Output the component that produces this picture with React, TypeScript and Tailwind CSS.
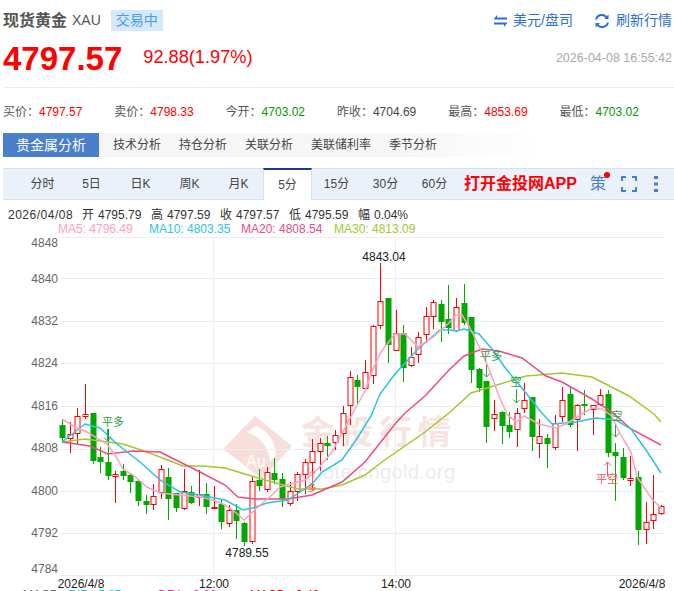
const stats = [
  { label: "买价：", value: "4797.57", color: "text-[#ff0000]" },
  { label: "卖价：", value: "4798.33", color: "text-[#ff0000]" },
  { label: "今开：", value: "4703.02", color: "text-[#009900]" },
  { label: "昨收：", value: "4704.69", color: "text-[#444444]" },
  { label: "最高：", value: "4853.69", color: "text-[#ff0000]" },
  { label: "最低：", value: "4703.02", color: "text-[#009900]" },
];

const analysisTabs = ["技术分析", "持仓分析", "关联分析", "美联储利率", "季节分析"];
const periods = ["分时", "5日", "日K", "周K", "月K", "5分", "15分", "30分", "60分"];

const ohlc = [
  { label: "开", value: "4795.79" },
  { label: "高", value: "4797.59" },
  { label: "收", value: "4797.57" },
  { label: "低", value: "4795.59" },
  { label: "幅", value: "0.04%" },
];

const maLegend = [
  { text: "MA5: 4796.49", className: "w-[91px] text-[#ffa0c0]" },
  { text: "MA10: 4803.35", className: "w-[92px] text-[#2bc4e0]" },
  { text: "MA20: 4808.54", className: "w-[93px] text-[#ee4b80]" },
  { text: "MA30: 4813.09", className: "text-[#a0c830]" },
];

// x, wick top, wick bottom, body top, body bottom, rising
type Candle = [number, number, number, number, number, boolean];

const candles: Candle[] = [
  [62, 418, 441, 424, 437, false],
  [70, 421, 452, 433, 437, true],
  [77, 407, 443, 415, 432, true],
  [85, 383, 418, 413, 415, true],
  [93, 412, 463, 412, 460, false],
  [100, 446, 472, 456, 461, false],
  [108, 428, 479, 461, 475, false],
  [115, 470, 502, 473, 475, true],
  [123, 463, 479, 470, 475, false],
  [130, 472, 492, 474, 481, false],
  [138, 479, 505, 480, 500, false],
  [146, 494, 513, 500, 504, false],
  [153, 483, 509, 495, 503, true],
  [161, 464, 498, 468, 491, true],
  [168, 467, 519, 476, 498, false],
  [176, 492, 511, 492, 507, false],
  [184, 468, 509, 490, 507, true],
  [191, 485, 503, 491, 502, false],
  [199, 469, 505, 493, 496, true],
  [206, 482, 513, 493, 506, false],
  [214, 485, 508, 506, 507, true],
  [221, 499, 528, 503, 521, false],
  [229, 504, 526, 509, 522, true],
  [236, 503, 538, 509, 520, false],
  [244, 521, 545, 522, 541, false],
  [252, 476, 543, 480, 540, true],
  [259, 468, 490, 479, 485, false],
  [267, 466, 491, 471, 488, true],
  [274, 457, 483, 472, 479, false],
  [282, 472, 506, 478, 498, false],
  [290, 481, 505, 490, 502, true],
  [297, 471, 500, 473, 490, true],
  [305, 458, 493, 461, 473, true],
  [312, 438, 490, 450, 461, true],
  [320, 437, 470, 442, 450, true],
  [327, 435, 459, 442, 445, false],
  [335, 429, 449, 434, 441, true],
  [343, 405, 445, 412, 432, true],
  [350, 370, 424, 376, 404, true],
  [357, 374, 403, 379, 386, false],
  [365, 359, 390, 371, 387, true],
  [373, 324, 383, 325, 374, true],
  [380, 262, 328, 300, 324, true],
  [388, 297, 362, 297, 344, false],
  [396, 309, 349, 332, 349, true],
  [403, 324, 381, 332, 367, false],
  [411, 346, 366, 356, 364, true],
  [418, 331, 362, 336, 353, true],
  [426, 306, 342, 315, 333, true],
  [433, 299, 328, 301, 315, true],
  [441, 299, 341, 303, 321, false],
  [448, 284, 333, 318, 327, false],
  [456, 297, 331, 306, 329, true],
  [464, 283, 324, 302, 322, false],
  [471, 316, 382, 316, 369, false],
  [479, 367, 391, 368, 387, false],
  [486, 380, 442, 380, 426, false],
  [494, 399, 430, 413, 417, true],
  [502, 410, 443, 411, 425, false],
  [509, 411, 437, 424, 431, false],
  [517, 407, 446, 412, 428, true],
  [524, 382, 412, 399, 407, true],
  [532, 396, 450, 396, 436, false],
  [539, 418, 457, 435, 442, true],
  [547, 433, 467, 437, 443, false],
  [555, 414, 449, 422, 446, true],
  [562, 386, 421, 399, 415, true],
  [570, 385, 426, 393, 424, false],
  [577, 403, 450, 404, 418, true],
  [584, 389, 414, 403, 405, false],
  [593, 404, 434, 404, 408, true],
  [600, 388, 405, 394, 403, true],
  [608, 389, 456, 393, 452, false],
  [615, 442, 500, 451, 455, false],
  [623, 447, 479, 456, 477, false],
  [630, 455, 485, 477, 479, true],
  [638, 470, 544, 476, 529, false],
  [646, 501, 543, 521, 528, true],
  [653, 474, 528, 513, 519, true],
  [661, 504, 514, 505, 512, true],
];

const ma5 =
  "62,418 75,426 87,431 107,443 115,454 123,468 133,474 147,486 160,492 180,494 200,496 213,499 225,504 235,511 244,519 258,506 272,494 280,486 305,479 317,469 332,451 348,421 355,408 365,390 373,368 381,351 395,333 405,333 418,346 432,337 449,322 456,314 462,314 469,325 479,345 489,368 499,395 507,413 516,421 524,415 539,423 556,427 566,423 582,413 592,407 602,408 612,415 619,431 631,451 637,476 652,498 662,508";
const ma10 =
  "62,441 85,423 100,427 117,443 140,461 160,479 180,491 200,494 225,499 243,509 253,507 267,502 288,499 312,483 322,471 342,459 358,436 371,415 380,393 395,373 418,348 440,329 450,329 456,330 464,328 479,333 492,348 506,368 522,387 541,411 552,423 576,421 596,417 616,419 631,428 646,449 661,472";
const ma20 =
  "62,441 90,445 108,453 133,450 160,451 180,461 200,471 225,484 238,496 255,498 288,498 312,494 342,481 365,461 395,423 405,412 425,395 449,369 464,355 482,348 499,350 522,357 546,375 562,381 592,398 612,411 631,428 661,444";
const ma30 =
  "62,441 85,438 123,443 147,451 183,465 203,465 225,467 245,473 265,479 298,488 322,488 342,484 365,474 382,461 425,431 449,412 471,392 526,375 562,372 592,376 629,395 654,413 661,421";

const gridY = [236, 277, 320, 362, 405, 448, 490, 532, 574];
const axisLabels = [
  { text: "4848", y: 246 },
  { text: "4840", y: 282 },
  { text: "4832", y: 324 },
  { text: "4824", y: 366 },
  { text: "4816", y: 409 },
  { text: "4808", y: 451 },
  { text: "4800", y: 494 },
  { text: "4792", y: 536 },
  { text: "4784", y: 572 },
];

const RED = "#ff0000";
const GREEN = "#00a800";
const CJK = "'Liberation Sans','Noto Sans CJK SC',sans-serif";

const KLineChart = () => (
  <svg width={674} height={356} viewBox="0 235 674 356" className="block" fontFamily={CJK}>
    {/* watermark */}
    <path d="M255 415 L292 445 L262 478 L223 448 Z" fill="#f6dfda" />
    <path d="M256 425 Q274 432 276 454 L270 461 Q268 438 246 431 Z" fill="#ffffff" />
    <text x="246" y="466" fontSize="16" fill="#ffffff">
      Au
    </text>
    <text x="301" y="443" fontSize="33" fontWeight="700" letterSpacing="6" fill="#f7e3df">
      金投行情
    </text>
    <text x="300" y="478" fontSize="20" letterSpacing="0.4" fill="#ececec">
      quote.cngold.org
    </text>

    {gridY.map((y) => (
      <line key={y} x1={60} x2={664} y1={y + 0.5} y2={y + 0.5} stroke="#eeeeee" />
    ))}
    <line x1={213.5} x2={213.5} y1={236} y2={574} stroke="#eeeeee" />
    <line x1={395.5} x2={395.5} y1={236} y2={574} stroke="#eeeeee" />

    {axisLabels.map((l) => (
      <text key={l.text} x={58} y={l.y} textAnchor="end" fontSize="12" fill="#666666">
        {l.text}
      </text>
    ))}

    {candles.map(([x, wt, wb, bt, bb, up]) => {
      const color = up ? RED : GREEN;
      return (
        <g key={x}>
          <line x1={x + 0.5} x2={x + 0.5} y1={wt} y2={up ? bt : wb} stroke={color} />
          {up && <line x1={x + 0.5} x2={x + 0.5} y1={bb} y2={wb} stroke={color} />}
          {up ? (
            <rect x={x - 2} y={bt + 0.5} width={5} height={Math.max(bb - bt, 1)} fill="#ffffff" stroke={color} />
          ) : (
            <rect x={x - 2.5} y={bt} width={6} height={bb - bt} fill={color} />
          )}
        </g>
      );
    })}

    <polyline points={ma30} fill="none" stroke="#a0c830" strokeWidth="1.5" />
    <polyline points={ma20} fill="none" stroke="#ee4b80" strokeWidth="1.5" />
    <polyline points={ma10} fill="none" stroke="#2bc4e0" strokeWidth="1.5" />
    <polyline points={ma5} fill="none" stroke="#ffa0c0" strokeWidth="1.5" />

    {/* trade marks */}
    <g fill="#2f9e3f" fontSize="11" textAnchor="middle">
      <text x={113} y={425}>平多</text>
      <text x={491} y={359}>平多</text>
      <text x={516} y={385}>空</text>
      <text x={617} y={419}>空</text>
    </g>
    <g fill="none" stroke="#2f9e3f">
      <path d="M107.5 428V440M104 436.5L107.5 440L111 436.5" />
      <path d="M486.5 364V376M483 372.5L486.5 376L490 372.5" />
      <path d="M516.5 388V402M513 398.5L516.5 402L520 398.5" />
      <path d="M615.5 424V436M612 432.5L615.5 436L619 432.5" />
    </g>
    <g fill="#ff5050" fontSize="11" textAnchor="middle">
      <text x={607} y={482}>平空</text>
      <text x={312} y={490} fontSize="9">多</text>
    </g>
    <g fill="none" stroke="#ff5050">
      <path d="M607.5 475V461M604 464.5L607.5 461L611 464.5" />
      <path d="M312.5 481V470M310 472.5L312.5 470L315 472.5" />
    </g>

    <g fontSize="12" fill="#222222" textAnchor="middle">
      <text x={384} y={260}>4843.04</text>
      <text x={247} y={556}>4789.55</text>
      <text x={81} y={587}>2026/4/8</text>
      <text x={214} y={587}>12:00</text>
      <text x={396} y={587}>14:00</text>
      <text x={642} y={587}>2026/4/8</text>
    </g>
    <g fontSize="12">
      <text x={23} y={598} fill="#666666">MACD</text>
      <text x={68} y={598} fill="#2bc4e0">DIF: -5.85</text>
      <text x={158} y={598} fill="#e040c0">DEA: -3.03</text>
      <text x={250} y={598} fill="#ff0000">MACD: -3.48</text>
    </g>
  </svg>
);

const App = () => {
  return (
    <div className="w-[674px] h-[591px] overflow-hidden bg-white font-['Liberation_Sans','Noto_Sans_CJK_SC',sans-serif]">
      <div className="flex items-center h-[21px] pt-[10px] box-content pl-[3px] pr-[2px]">
        <span className="text-[16px] font-bold text-[#555555]">现货黄金</span>
        <span className="ml-[5px] text-[14px] text-[#555555]">XAU</span>
        <span className="ml-[10px] w-[52px] h-[21px] leading-[21px] text-center text-[14px] text-[#4a9be8] bg-[#d6e9fb]">
          交易中
        </span>
        <div className="ml-auto flex items-center text-[14px] text-[#2f6fd0]">
          <svg width="15" height="12" viewBox="0 0 15 12" fill="#2f6fd0">
            <path d="M4 0L4 2.5H14V4.5H0.5Z" />
            <path d="M11 12L11 9.5H1V7.5H14.5Z" />
          </svg>
          <span className="ml-[5px]">美元/盘司</span>
          <svg className="ml-[21px]" width="16" height="16" viewBox="0 0 16 16" fill="none" stroke="#2f6fd0" strokeWidth="2">
            <path d="M2 6.5A6 6 0 0 1 13 5" />
            <path d="M14 9.5A6 6 0 0 1 3 11" />
            <path d="M14.5 1.5V6H10Z" fill="#2f6fd0" stroke="none" />
            <path d="M1.5 14.5V10H6Z" fill="#2f6fd0" stroke="none" />
          </svg>
          <span className="ml-[6px]">刷新行情</span>
        </div>
      </div>

      <div className="flex items-center h-[38px] mt-[8px] pl-[3px] pr-[2px]">
        <span className="text-[33px] font-bold text-[#ff0000] leading-none">4797.57</span>
        <span className="ml-[21px] text-[18.2px] text-[#ff0000]">92.88(1.97%)</span>
        <span className="ml-auto text-[12.5px] text-[#aaaaaa]">2026-04-08 16:55:42</span>
      </div>

      <div className="ml-[3px] mt-[10px] h-[1px] bg-[#eeeeee]" />

      <div className="flex items-center h-[45px] pt-[2px] pl-[3px] text-[12px]">
        {stats.map((s) => (
          <div key={s.label} className="w-[111.3px] shrink-0 text-[#555555]">
            {s.label}
            <span className={s.color}>{s.value}</span>
          </div>
        ))}
      </div>

      <div className="flex items-center h-[24px] ml-[3px] bg-gradient-to-r from-[#f6f6f6] from-60% to-white to-80% text-[12px] text-[#444444]">
        <span className="w-[96px] h-full leading-[24px] text-center text-[14px] text-white bg-[#4a7fc9]">贵金属分析</span>
        <div className="ml-[14px] flex gap-[18px]">
          {analysisTabs.map((t) => (
            <span key={t}>{t}</span>
          ))}
        </div>
      </div>

      <div className="flex items-stretch h-[32px] mt-[11px] ml-[3px] bg-[#eaf1fb] border-y border-[#d5e0f0] text-[12px] text-[#444444]">
        <div className="ml-[15px] flex">
          {periods.map((p) =>
            p === "5分" ? (
              <span
                key={p}
                className="w-[49px] -mt-px -mb-px flex items-center justify-center bg-white border-x border-[#d5e0f0] border-t-2 border-t-[#1a3a8a]"
              >
                {p}
              </span>
            ) : (
              <span key={p} className="w-[49px] flex items-center justify-center">
                {p}
              </span>
            )
          )}
        </div>
        <span className="ml-[5px] self-center text-[16px] font-bold text-[#ff0000]">打开金投网APP</span>
        <div className="relative ml-[13px] self-center text-[16px] text-[#4a7fc9]">
          策
          <span className="absolute -right-[4px] top-[0px] w-[6px] h-[6px] rounded-full bg-[#ff0000]" />
        </div>
        <svg className="ml-[15px] self-center" width="16" height="16" viewBox="0 0 16 16" fill="none" stroke="#4a7fc9" strokeWidth="2">
          <path d="M1 5V1H5M11 1H15V5M15 11V15H11M5 15H1V11" />
        </svg>
        <svg className="ml-[17px] self-center" width="4" height="16" viewBox="0 0 4 16" fill="#4a7fc9">
          <rect x="0" y="0" width="4" height="3" />
          <rect x="0" y="6.5" width="4" height="3" />
          <rect x="0" y="13" width="4" height="3" />
        </svg>
      </div>

      <div className="flex pl-[8px] mt-[8px] h-[15px] leading-[15px] text-[12px] text-[#333333]">
        <span className="w-[74px] tracking-[0.5px]">2026/04/08</span>
        {ohlc.map((o) => (
          <span key={o.label} className="w-[69px] shrink-0">
            {o.label}
            <span className="ml-[4px]">{o.value}</span>
          </span>
        ))}
      </div>
      <div className="flex pl-[58px] h-[13px] leading-[13px] text-[12px]">
        {maLegend.map((m) => (
          <span key={m.text} className={m.className}>
            {m.text}
          </span>
        ))}
      </div>

      <KLineChart />
    </div>
  );
};

export default App;
